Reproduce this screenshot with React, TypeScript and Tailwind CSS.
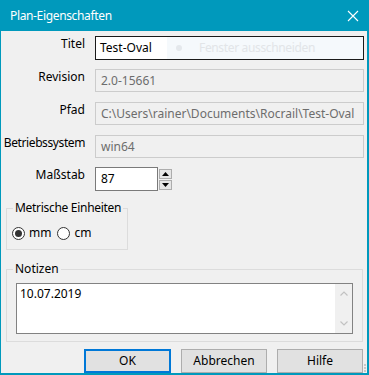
import React from "react";

function Label({ children, cls = "" }: { children: React.ReactNode; cls?: string }) {
  return <div className={`w-[84px] shrink-0 text-right leading-[16px] text-black whitespace-nowrap ${cls}`}>{children}</div>;
}

function ReadOnlyRow({ label, value, mt, labelCls = "" }: { label: string; value: string; mt: string; labelCls?: string }) {
  return (
    <div className={`flex items-start ${mt}`}>
      <Label cls={labelCls}>{label}</Label>
      <div className="ml-[10px] w-[269px] h-[23px] border border-[#cccccc] bg-[#f0f0f0] flex items-center pl-[5px] text-[#6d6d6d] leading-[16px] whitespace-nowrap overflow-hidden">
        {value}
      </div>
    </div>
  );
}

function Radio({ checked }: { checked?: boolean }) {
  return (
    <div className="w-[13px] h-[13px] rounded-full border border-[#333333] bg-white flex items-center justify-center shrink-0">
      {checked && <div className="w-[7px] h-[7px] rounded-full bg-[#333333]" />}
    </div>
  );
}

export default function App() {
  return (
    <div className="relative w-[369px] h-[375px] flex flex-col bg-[#f0f0f0] border-l border-r-2 border-b-2 border-[#0099bc] overflow-hidden font-['Noto_Sans',sans-serif] text-[12px] text-black">
      {/* Title bar */}
      <div className="h-[31px] shrink-0 bg-[#0099bc] flex items-center justify-between pl-[9px] pr-[8px]">
        <span className="text-white text-[12px] leading-[16px] tracking-[-0.35px]">Plan-Eigenschaften</span>
        <svg width="12" height="12" viewBox="0 0 12 12">
          <path d="M1 1 L11 11 M11 1 L1 11" stroke="white" strokeWidth="1.1" />
        </svg>
      </div>

      {/* Titel */}
      <div className="flex items-start mt-[5px]">
        <Label>Titel</Label>
        <div className="ml-[10px] w-[269px] h-[24px] border border-[#1a1a1a] flex overflow-hidden">
          <div className="w-[71px] bg-white flex items-center pl-[4px] leading-[16px]">Test-Oval</div>
          <div className="flex-1 bg-[#f5f9fc] flex items-center">
            <div className="ml-[9px] w-[6px] h-[6px] rounded-full bg-[#e4e8ec]" />
            <span className="ml-[17px] text-[#e2e5e8] leading-[16px] whitespace-nowrap tracking-[-0.35px]">Fenster ausschneiden</span>
          </div>
        </div>
      </div>

      <ReadOnlyRow label="Revision" value="2.0-15661" mt="mt-[9px]" />
      <ReadOnlyRow label="Pfad" value="C:\Users\rainer\Documents\Rocrail\Test-Oval" mt="mt-[10px]" />
      <ReadOnlyRow label="Betriebssystem" value="win64" mt="mt-[10px]" labelCls="tracking-[-0.4px]" />

      {/* Maßstab */}
      <div className="flex items-start mt-[9px]">
        <Label>Maßstab</Label>
        <div className="ml-[10px] flex h-[24px]">
          <div className="w-[63px] h-[24px] border border-[#7a7a7a] bg-white flex items-center pl-[5px] leading-[16px]">87</div>
          <div className="w-[16px] h-[24px] flex flex-col items-start justify-center gap-[1px] pl-[1px]">
            <div className="w-[13px] h-[10px] border border-[#adadad] bg-[#e5e5e5] flex items-center justify-center">
              <svg width="7" height="4" viewBox="0 0 7 4"><path d="M0 4 L3.5 0 L7 4 Z" fill="#000" /></svg>
            </div>
            <div className="w-[13px] h-[10px] border border-[#adadad] bg-[#e5e5e5] flex items-center justify-center">
              <svg width="7" height="4" viewBox="0 0 7 4"><path d="M0 0 L3.5 4 L7 0 Z" fill="#000" /></svg>
            </div>
          </div>
        </div>
      </div>

      {/* Metrische Einheiten */}
      <fieldset className="ml-[5px] mt-[9px] w-[122px] border border-[#dcdcdc]">
        <legend className="ml-[6px] px-[2px] leading-[16px] whitespace-nowrap tracking-[-0.3px]">Metrische Einheiten</legend>
        <div className="flex items-center h-[16px] pl-[5px] mt-[9px] mb-[8px]">
          <Radio checked />
          <span className="ml-[4px] leading-[16px]">mm</span>
          <div className="ml-[6px]"><Radio /></div>
          <span className="ml-[4px] leading-[16px]">cm</span>
        </div>
      </fieldset>

      {/* Notizen */}
      <fieldset className="ml-[5px] mt-[11px] w-[357px] border border-[#dcdcdc]">
        <legend className="ml-[6px] px-[2px] leading-[16px]">Notizen</legend>
        <div className="mx-[9px] mt-[6px] mb-[7px] h-[51px] border border-[#828282] bg-white flex">
          <div className="flex-1 pl-[3px] pt-[2px] leading-[16px]">10.07.2019</div>
          <div className="w-[17px] bg-[#f0f0f0] flex flex-col items-center justify-between py-[7px]">
            <svg width="8" height="5" viewBox="0 0 8 5"><path d="M0.5 4.5 L4 1 L7.5 4.5" stroke="#c2c2c2" strokeWidth="1.2" fill="none" /></svg>
            <svg width="8" height="5" viewBox="0 0 8 5"><path d="M0.5 0.5 L4 4 L7.5 0.5" stroke="#c2c2c2" strokeWidth="1.2" fill="none" /></svg>
          </div>
        </div>
      </fieldset>

      {/* Buttons */}
      <div className="flex justify-end gap-[10px] mt-[7px] pr-[4px]">
        <button className="w-[87px] h-[24px] border-2 border-[#0078d7] bg-[#e1e1e1] leading-[16px]">OK</button>
        <button className="w-[86px] h-[24px] border border-[#adadad] bg-[#e1e1e1] leading-[16px]">Abbrechen</button>
        <button className="w-[86px] h-[24px] border border-[#adadad] bg-[#e1e1e1] leading-[16px]">Hilfe</button>
      </div>

      {/* size grip */}
      <div className="absolute right-[1px] bottom-[1px] flex flex-col gap-[1px]">
        <div className="w-[2px] h-[2px] bg-[#c8c8c8]" />
        <div className="w-[2px] h-[2px] bg-[#c8c8c8]" />
        <div className="w-[2px] h-[2px] bg-[#c8c8c8]" />
      </div>
    </div>
  );
}
